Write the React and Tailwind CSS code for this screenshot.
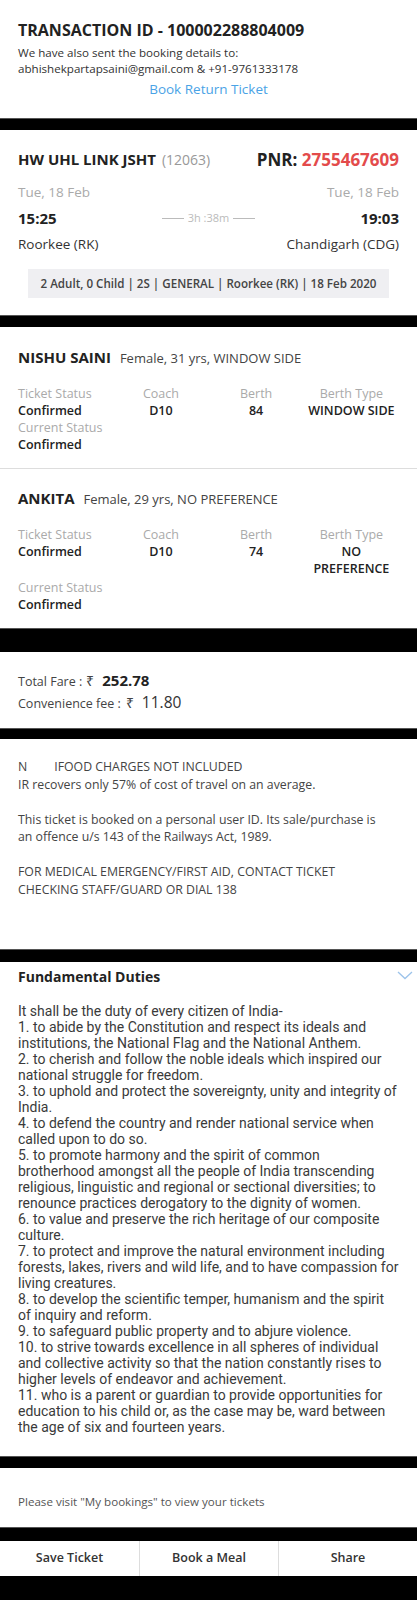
import React from "react";

function Band({ h }) {
  return <div className={`bg-black border-t border-[#555] ${h}`} />;
}

const duties = [
  "It shall be the duty of every citizen of India-",
  "1. to abide by the Constitution and respect its ideals and",
  "institutions, the National Flag and the National Anthem.",
  "2. to cherish and follow the noble ideals which inspired our",
  "national struggle for freedom.",
  "3. to uphold and protect the sovereignty, unity and integrity of",
  "India.",
  "4. to defend the country and render national service when",
  "called upon to do so.",
  "5. to promote harmony and the spirit of common",
  "brotherhood amongst all the people of India transcending",
  "religious, linguistic and regional or sectional diversities; to",
  "renounce practices derogatory to the dignity of women.",
  "6. to value and preserve the rich heritage of our composite",
  "culture.",
  "7. to protect and improve the natural environment including",
  "forests, lakes, rivers and wild life, and to have compassion for",
  "living creatures.",
  "8. to develop the scientific temper, humanism and the spirit",
  "of inquiry and reform.",
  "9. to safeguard public property and to abjure violence.",
  "10. to strive towards excellence in all spheres of individual",
  "and collective activity so that the nation constantly rises to",
  "higher levels of endeavor and achievement.",
  "11. who is a parent or guardian to provide opportunities for",
  "education to his child or, as the case may be, ward between",
  "the age of six and fourteen years.",
];

function Passenger({ name, info, coach, berth, type, wrapType }) {
  return (
    <div className="px-[18px]">
      <div className="flex items-baseline leading-[22px]">
        <span className="text-[15px] font-bold text-[#222]">{name}</span>
        <span className="ml-[9px] text-[13px] text-[#444]">{info}</span>
      </div>
      <div className="mt-[16px] grid grid-cols-4 text-[12.5px] leading-[17px]">
        <div>
          <div className="text-[#aaa]">Ticket Status</div>
          <div className="font-semibold text-[#222]">Confirmed</div>
        </div>
        <div className="text-center">
          <div className="text-[#aaa]">Coach</div>
          <div className="font-semibold text-[#222]">{coach}</div>
        </div>
        <div className="text-center">
          <div className="text-[#aaa]">Berth</div>
          <div className="font-semibold text-[#222]">{berth}</div>
        </div>
        <div className="text-center">
          <div className="text-[#aaa]">Berth Type</div>
          <div className="font-semibold text-[#222]">{type}</div>
        </div>
      </div>
      <div className={`text-[12.5px] leading-[17px] ${wrapType ? "mt-[2px]" : ""}`}>
        <div className="text-[#aaa]">Current Status</div>
        <div className="font-semibold text-[#222]">Confirmed</div>
      </div>
    </div>
  );
}

export default function App() {
  return (
    <div className="w-[417px] h-[1600px] bg-black font-['Open_Sans',sans-serif] text-[#333]">
      {/* Header */}
      <div className="bg-white h-[118px] px-[18px] pt-[18px]">
        <div className="text-[16px] font-bold leading-[24px] text-[#222]">
          TRANSACTION ID - 100002288804009
        </div>
        <div className="mt-[3px] text-[11.6px] leading-[16px] text-[#333]">
          We have also sent the booking details to:
          <br />
          abhishekpartapsaini@gmail.com &amp; +91-9761333178
        </div>
        <div className="mt-[3px] text-center text-[13.5px] leading-[18px] text-[#4aa3e6]">
          Book Return Ticket
        </div>
      </div>
      <Band h="h-[12px]" />

      {/* Journey */}
      <div className="bg-white h-[185px] px-[18px] pt-[18px]">
        <div className="flex items-center justify-between leading-[22px]">
          <div>
            <span className="text-[15px] font-bold text-[#222]">HW UHL LINK JSHT</span>
            <span className="ml-[6px] text-[14px] text-[#999]">(12063)</span>
          </div>
          <div className="text-[17px] font-bold text-[#222]">
            PNR: <span className="text-[#e34b4b]">2755467609</span>
          </div>
        </div>
        <div className="mt-[11px] flex justify-between text-[13.5px] leading-[20px] text-[#aaa]">
          <span>Tue, 18 Feb</span>
          <span>Tue, 18 Feb</span>
        </div>
        <div className="mt-[6px] flex items-center justify-between leading-[20px]">
          <span className="w-[80px] text-[15px] font-bold text-[#222]">15:25</span>
          <span className="flex items-center gap-[4px] text-[11px] text-[#bbb]">
            <span className="inline-block h-px w-[22px] bg-[#bbb]" />
            3h :38m
            <span className="inline-block h-px w-[22px] bg-[#bbb]" />
          </span>
          <span className="w-[80px] text-right text-[15px] font-bold text-[#222]">19:03</span>
        </div>
        <div className="mt-[6px] flex justify-between text-[13.5px] leading-[20px] text-[#333]">
          <span>Roorkee (RK)</span>
          <span>Chandigarh (CDG)</span>
        </div>
        <div className="mt-[15px] mx-[10px] flex h-[29px] items-center justify-center bg-[#efeff2] text-[11.6px] font-semibold text-[#444]">
          2 Adult, 0 Child | 2S | GENERAL | Roorkee (RK) | 18 Feb 2020
        </div>
      </div>
      <Band h="h-[12px]" />

      {/* Passengers */}
      <div className="bg-white">
        <div className="h-[142px] pt-[19px] border-b border-[#ddd]">
          <Passenger name="NISHU SAINI" info="Female, 31 yrs, WINDOW SIDE" coach="D10" berth="84" type="WINDOW SIDE" />
        </div>
        <div className="h-[159px] pt-[18px]">
          <Passenger
            name="ANKITA"
            info="Female, 29 yrs, NO PREFERENCE"
            coach="D10"
            berth="74"
            type={<>NO<br />PREFERENCE</>}
            wrapType
          />
        </div>
      </div>
      <Band h="h-[24px]" />

      {/* Fare */}
      <div className="bg-white h-[76px] px-[18px] pt-[18px] text-[12.5px] leading-[21px] text-[#444]">
        <div className="flex items-baseline">
          <span>Total Fare :</span>
          <span className="ml-[4px] text-[14px]">₹</span>
          <span className="ml-[8px] text-[15px] font-bold text-[#222]">252.78</span>
        </div>
        <div className="flex items-baseline">
          <span>Convenience fee :</span>
          <span className="ml-[5px] text-[14px]">₹</span>
          <span className="ml-[8px] text-[15.5px] text-[#333]">11.80</span>
        </div>
      </div>
      <Band h="h-[11px]" />

      {/* Notes */}
      <div className="bg-white h-[210px] px-[18px] pt-[19px] text-[12.3px] leading-[17.5px] text-[#444]">
        <div>
          N<span className="inline-block w-[27px]" />IFOOD CHARGES NOT INCLUDED
        </div>
        <div>IR recovers only 57% of cost of travel on an average.</div>
        <div className="h-[17.5px]" />
        <div>This ticket is booked on a personal user ID. Its sale/purchase is</div>
        <div>an offence u/s 143 of the Railways Act, 1989.</div>
        <div className="h-[17.5px]" />
        <div>FOR MEDICAL EMERGENCY/FIRST AID, CONTACT TICKET</div>
        <div>CHECKING STAFF/GUARD OR DIAL 138</div>
      </div>
      <Band h="h-[13px]" />

      {/* Fundamental duties */}
      <div className="bg-white h-[494px] pt-[5px]">
        <div className="flex items-center justify-between pl-[18px] pr-[4px] leading-[20px]">
          <span className="text-[14px] font-bold text-[#222]">Fundamental Duties</span>
          <svg width="16" height="9" viewBox="0 0 16 9" className="-mt-[4px]">
            <path d="M1 1 L8 7.5 L15 1" fill="none" stroke="#9cc3ea" strokeWidth="1.3" />
          </svg>
        </div>
        <div className="mt-[16px] px-[18px] font-['Roboto',sans-serif] text-[14px] leading-[16px] text-[#3a3a3a]">
          {duties.map((l, i) => (
            <div key={i} className="whitespace-nowrap">{l}</div>
          ))}
        </div>
      </div>
      <Band h="h-[12px]" />

      {/* Visit */}
      <div className="bg-white h-[59px] px-[18px] pt-[25px] text-[11.6px] leading-[18px] text-[#555]">
        Please visit "My bookings" to view your tickets
      </div>
      <Band h="h-[14px]" />

      {/* Buttons */}
      <div className="grid h-[35px] grid-cols-3 bg-white text-[12.5px] font-semibold text-[#333]">
        <div className="flex items-center justify-center">Save Ticket</div>
        <div className="flex items-center justify-center border-l border-[#ddd]">Book a Meal</div>
        <div className="flex items-center justify-center border-l border-[#ddd]">Share</div>
      </div>
    </div>
  );
}
